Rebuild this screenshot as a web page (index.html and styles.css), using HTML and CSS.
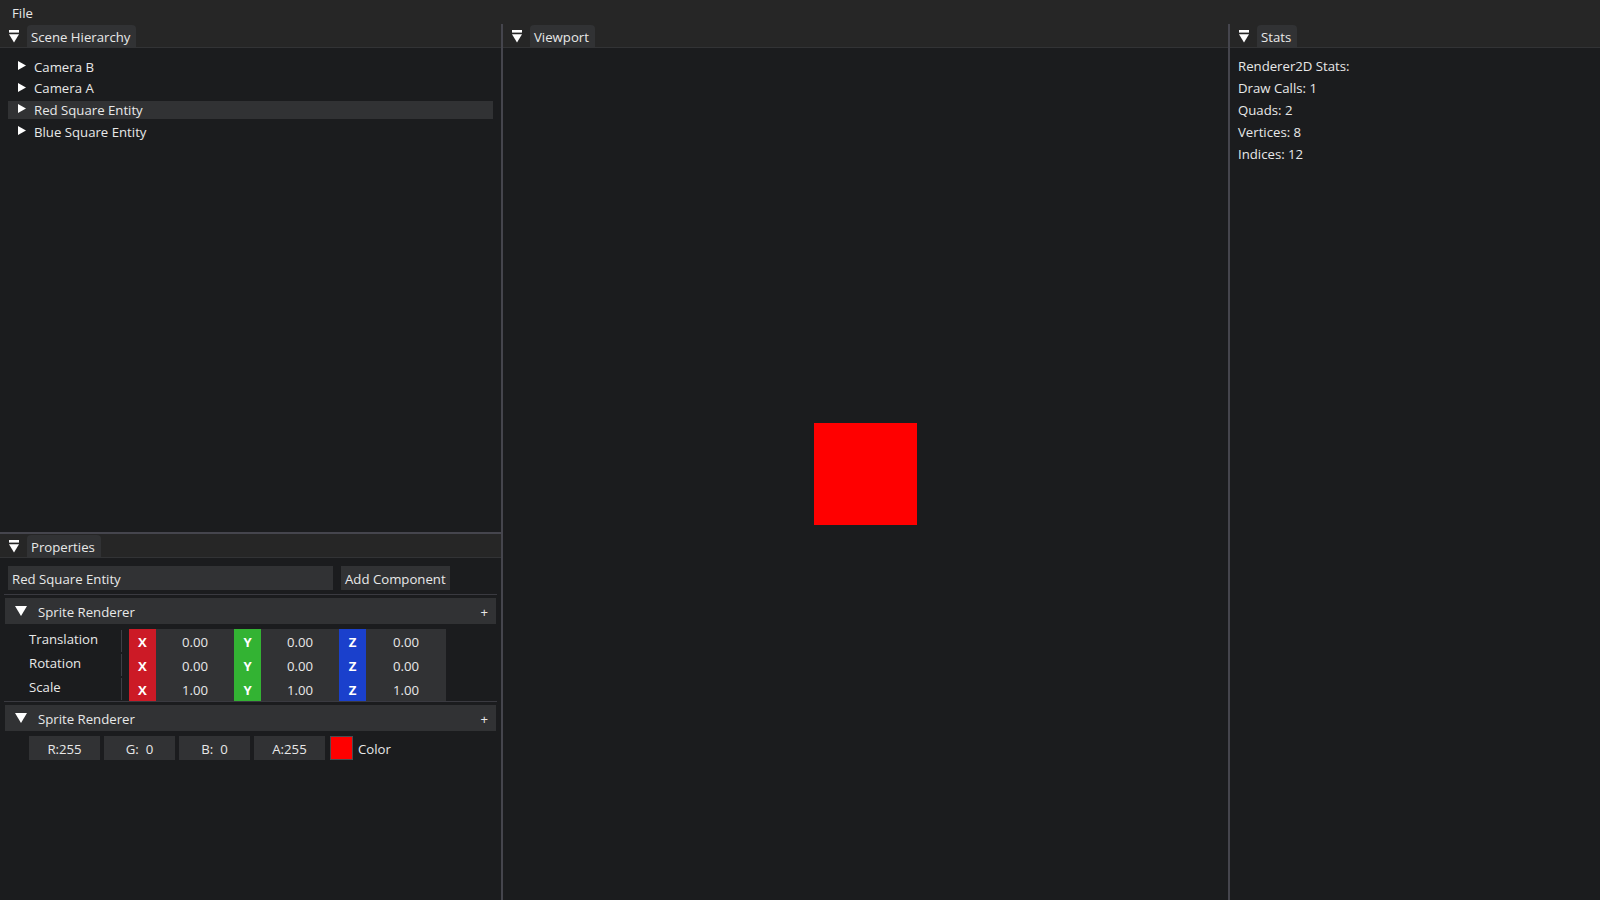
FILE: index.html
```html
<!DOCTYPE html>
<html>
<head>
<meta charset="utf-8">
<title>Editor</title>
<link rel="stylesheet" href="styles.css">
</head>
<body>
<div class="menubar"><span class="menu-item">File</span></div>
<div class="dock">
  <div class="col-left">
    <section class="win win-hier">
      <div class="tabbar">
        <svg class="win-menu" viewBox="0 0 10 13"><rect x="0" y="0" width="10" height="2.6" fill="#fff"/><polygon points="0,4.2 10,4.2 5,12.6" fill="#fff"/></svg>
        <div class="tab">Scene Hierarchy</div>
      </div>
      <div class="content hier">
        <div class="tree-row"><svg class="arrow" viewBox="0 0 8 9"><polygon points="0,0 8,4.5 0,9" fill="#fff"/></svg><span>Camera B</span></div>
        <div class="tree-row"><svg class="arrow" viewBox="0 0 8 9"><polygon points="0,0 8,4.5 0,9" fill="#fff"/></svg><span>Camera A</span></div>
        <div class="tree-row selected"><svg class="arrow" viewBox="0 0 8 9"><polygon points="0,0 8,4.5 0,9" fill="#fff"/></svg><span>Red Square Entity</span></div>
        <div class="tree-row"><svg class="arrow" viewBox="0 0 8 9"><polygon points="0,0 8,4.5 0,9" fill="#fff"/></svg><span>Blue Square Entity</span></div>
      </div>
    </section>
    <div class="hsplit"></div>
    <section class="win win-props">
      <div class="tabbar">
        <svg class="win-menu" viewBox="0 0 10 13"><rect x="0" y="0" width="10" height="2.6" fill="#fff"/><polygon points="0,4.2 10,4.2 5,12.6" fill="#fff"/></svg>
        <div class="tab">Properties</div>
      </div>
      <div class="content props">
        <div class="name-row">
          <div class="input">Red Square Entity</div>
          <div class="btn">Add Component</div>
        </div>
        <div class="sep"></div>
        <div class="comp-header">
          <svg class="hdr-arrow" viewBox="0 0 12 10"><polygon points="0,0 12,0 6,10" fill="#fff"/></svg>
          <span>Sprite Renderer</span>
          <span class="plus">+</span>
        </div>
        <div class="xform">
          <div class="xrow">
            <div class="label">Translation</div>
            <div class="ax ax-x">X</div><div class="field">0.00</div>
            <div class="ax ax-y">Y</div><div class="field">0.00</div>
            <div class="ax ax-z">Z</div><div class="field last">0.00</div>
          </div>
          <div class="xrow">
            <div class="label">Rotation</div>
            <div class="ax ax-x">X</div><div class="field">0.00</div>
            <div class="ax ax-y">Y</div><div class="field">0.00</div>
            <div class="ax ax-z">Z</div><div class="field last">0.00</div>
          </div>
          <div class="xrow">
            <div class="label">Scale</div>
            <div class="ax ax-x">X</div><div class="field">1.00</div>
            <div class="ax ax-y">Y</div><div class="field">1.00</div>
            <div class="ax ax-z">Z</div><div class="field last">1.00</div>
          </div>
        </div>
        <div class="sep sep-tight"></div>
        <div class="comp-header">
          <svg class="hdr-arrow" viewBox="0 0 12 10"><polygon points="0,0 12,0 6,10" fill="#fff"/></svg>
          <span>Sprite Renderer</span>
          <span class="plus">+</span>
        </div>
        <div class="color-row">
          <div class="cbox">R:255</div>
          <div class="cbox">G:  0</div>
          <div class="cbox">B:  0</div>
          <div class="cbox">A:255</div>
          <div class="swatch"></div>
          <span class="color-label">Color</span>
        </div>
      </div>
    </section>
  </div>
  <div class="vsplit"></div>
  <section class="win win-view">
    <div class="tabbar">
      <svg class="win-menu" viewBox="0 0 10 13"><rect x="0" y="0" width="10" height="2.6" fill="#fff"/><polygon points="0,4.2 10,4.2 5,12.6" fill="#fff"/></svg>
      <div class="tab">Viewport</div>
    </div>
    <div class="content viewport">
      <div class="square"></div>
    </div>
  </section>
  <div class="vsplit"></div>
  <section class="win win-stats">
    <div class="tabbar">
      <svg class="win-menu" viewBox="0 0 10 13"><rect x="0" y="0" width="10" height="2.6" fill="#fff"/><polygon points="0,4.2 10,4.2 5,12.6" fill="#fff"/></svg>
      <div class="tab">Stats</div>
    </div>
    <div class="content stats">
      <div class="stat">Renderer2D Stats:</div>
      <div class="stat">Draw Calls: 1</div>
      <div class="stat">Quads: 2</div>
      <div class="stat">Vertices: 8</div>
      <div class="stat">Indices: 12</div>
    </div>
  </section>
</div>
</body>
</html>
```

FILE: styles.css
```css
* { box-sizing: border-box; }
html, body { margin: 0; padding: 0; }
body {
  width: 1600px;
  height: 900px;
  overflow: hidden;
  background: #1b1c1e;
  font-family: "Open Sans", "DejaVu Sans", sans-serif;
  font-size: 13.2px;
  color: #e8e8e8;
  white-space: nowrap;
}

.menubar {
  height: 24px;
  background: #262626;
  padding: 2px 0 0 12px;
  line-height: 22px;
}

.dock { display: flex; height: 876px; }
.col-left { width: 501px; display: flex; flex-direction: column; }
.hsplit { height: 2px; background: #45454d; flex: none; }
.vsplit { width: 2px; background: #45454d; flex: none; }

.win { display: flex; flex-direction: column; background: #1b1c1e; min-height: 0; }
.win-hier { height: 508px; flex: none; }
.win-props { flex: 1; }
.win-view { width: 725px; flex: none; }
.win-stats { flex: 1; }

.tabbar {
  height: 24px;
  flex: none;
  background: #262626;
  border-bottom: 1px solid #323335;
  display: flex;
  padding-top: 1px;
  padding-left: 9px;
}
.win-menu { width: 10px; height: 13px; align-self: center; margin-right: 8px; }
.tab {
  background: #313234;
  border-radius: 4px 4px 0 0;
  padding: 2px 6px 0 4px;
  line-height: 20px;
  height: 22px;
}

.content { flex: 1; min-height: 0; }

/* hierarchy */
.hier { padding: 10px 8px 8px; display: flex; flex-direction: column; gap: 3.7px; }
.tree-row { height: 18px; display: flex; align-items: center; padding-left: 10px; }
.tree-row span { margin-top: -1px; }
.tree-row.selected { background: #313234; }
.arrow { width: 8px; height: 9px; margin-right: 8px; margin-top: -3px; }

/* stats */
.stats { padding: 8px; }
.stat { line-height: 21.9px; }

/* viewport */
.viewport { display: flex; align-items: center; justify-content: center; }
.square { width: 103px; height: 102px; background: #ff0000; }

/* properties */
.props { padding: 8px; }
.name-row { display: flex; gap: 8px; height: 24px; }
.input { width: 325px; background: #313234; padding: 2px 0 0 4px; line-height: 22px; }
.btn { width: 109px; background: #313234; padding: 2px 4px 0; line-height: 22px; }

.sep { height: 1px; background: #3a3a40; margin: 4px -4px 0; }
.sep.sep-tight { margin-top: 0; }

.comp-header {
  height: 26px;
  margin: 3px -3px 0;
  background: #313234;
  display: flex;
  align-items: center;
  padding: 1px 8px 0 10px;
}
.hdr-arrow { width: 12px; height: 10px; margin-right: 11px; margin-top: -1px; }
.plus { margin-left: auto; }

.xform { margin-top: 5px; }
.xrow { display: flex; height: 24px; }
.label {
  width: 114px;
  padding-left: 21px;
  line-height: 20px;
  margin-right: 7px;
  background: linear-gradient(#3e3e44, #3e3e44) right 1px / 1px 22px no-repeat;
}
.ax {
  width: 27px;
  text-align: center;
  padding-top: 2px;
  line-height: 22px;
  font-weight: 700;
  color: #ffffff;
}
.ax-x { background: #cc1a26; }
.ax-y { background: #33b333; }
.ax-z { background: #1a40cc; }
.field { width: 78px; background: #313234; text-align: center; padding-top: 2px; line-height: 22px; }
.field.last { width: 80px; }

.color-row { display: flex; align-items: center; gap: 4px; margin-top: 5px; padding-left: 21px; height: 24px; }
.cbox { width: 71px; height: 24px; padding-top: 2px; line-height: 22px; background: #313234; text-align: center; white-space: pre; }
.swatch { width: 23px; height: 24px; background: #ff0000; border: 1px solid #4b4b50; margin-left: 1px; }
.color-label { margin-left: 1px; padding-top: 1px; }
```
